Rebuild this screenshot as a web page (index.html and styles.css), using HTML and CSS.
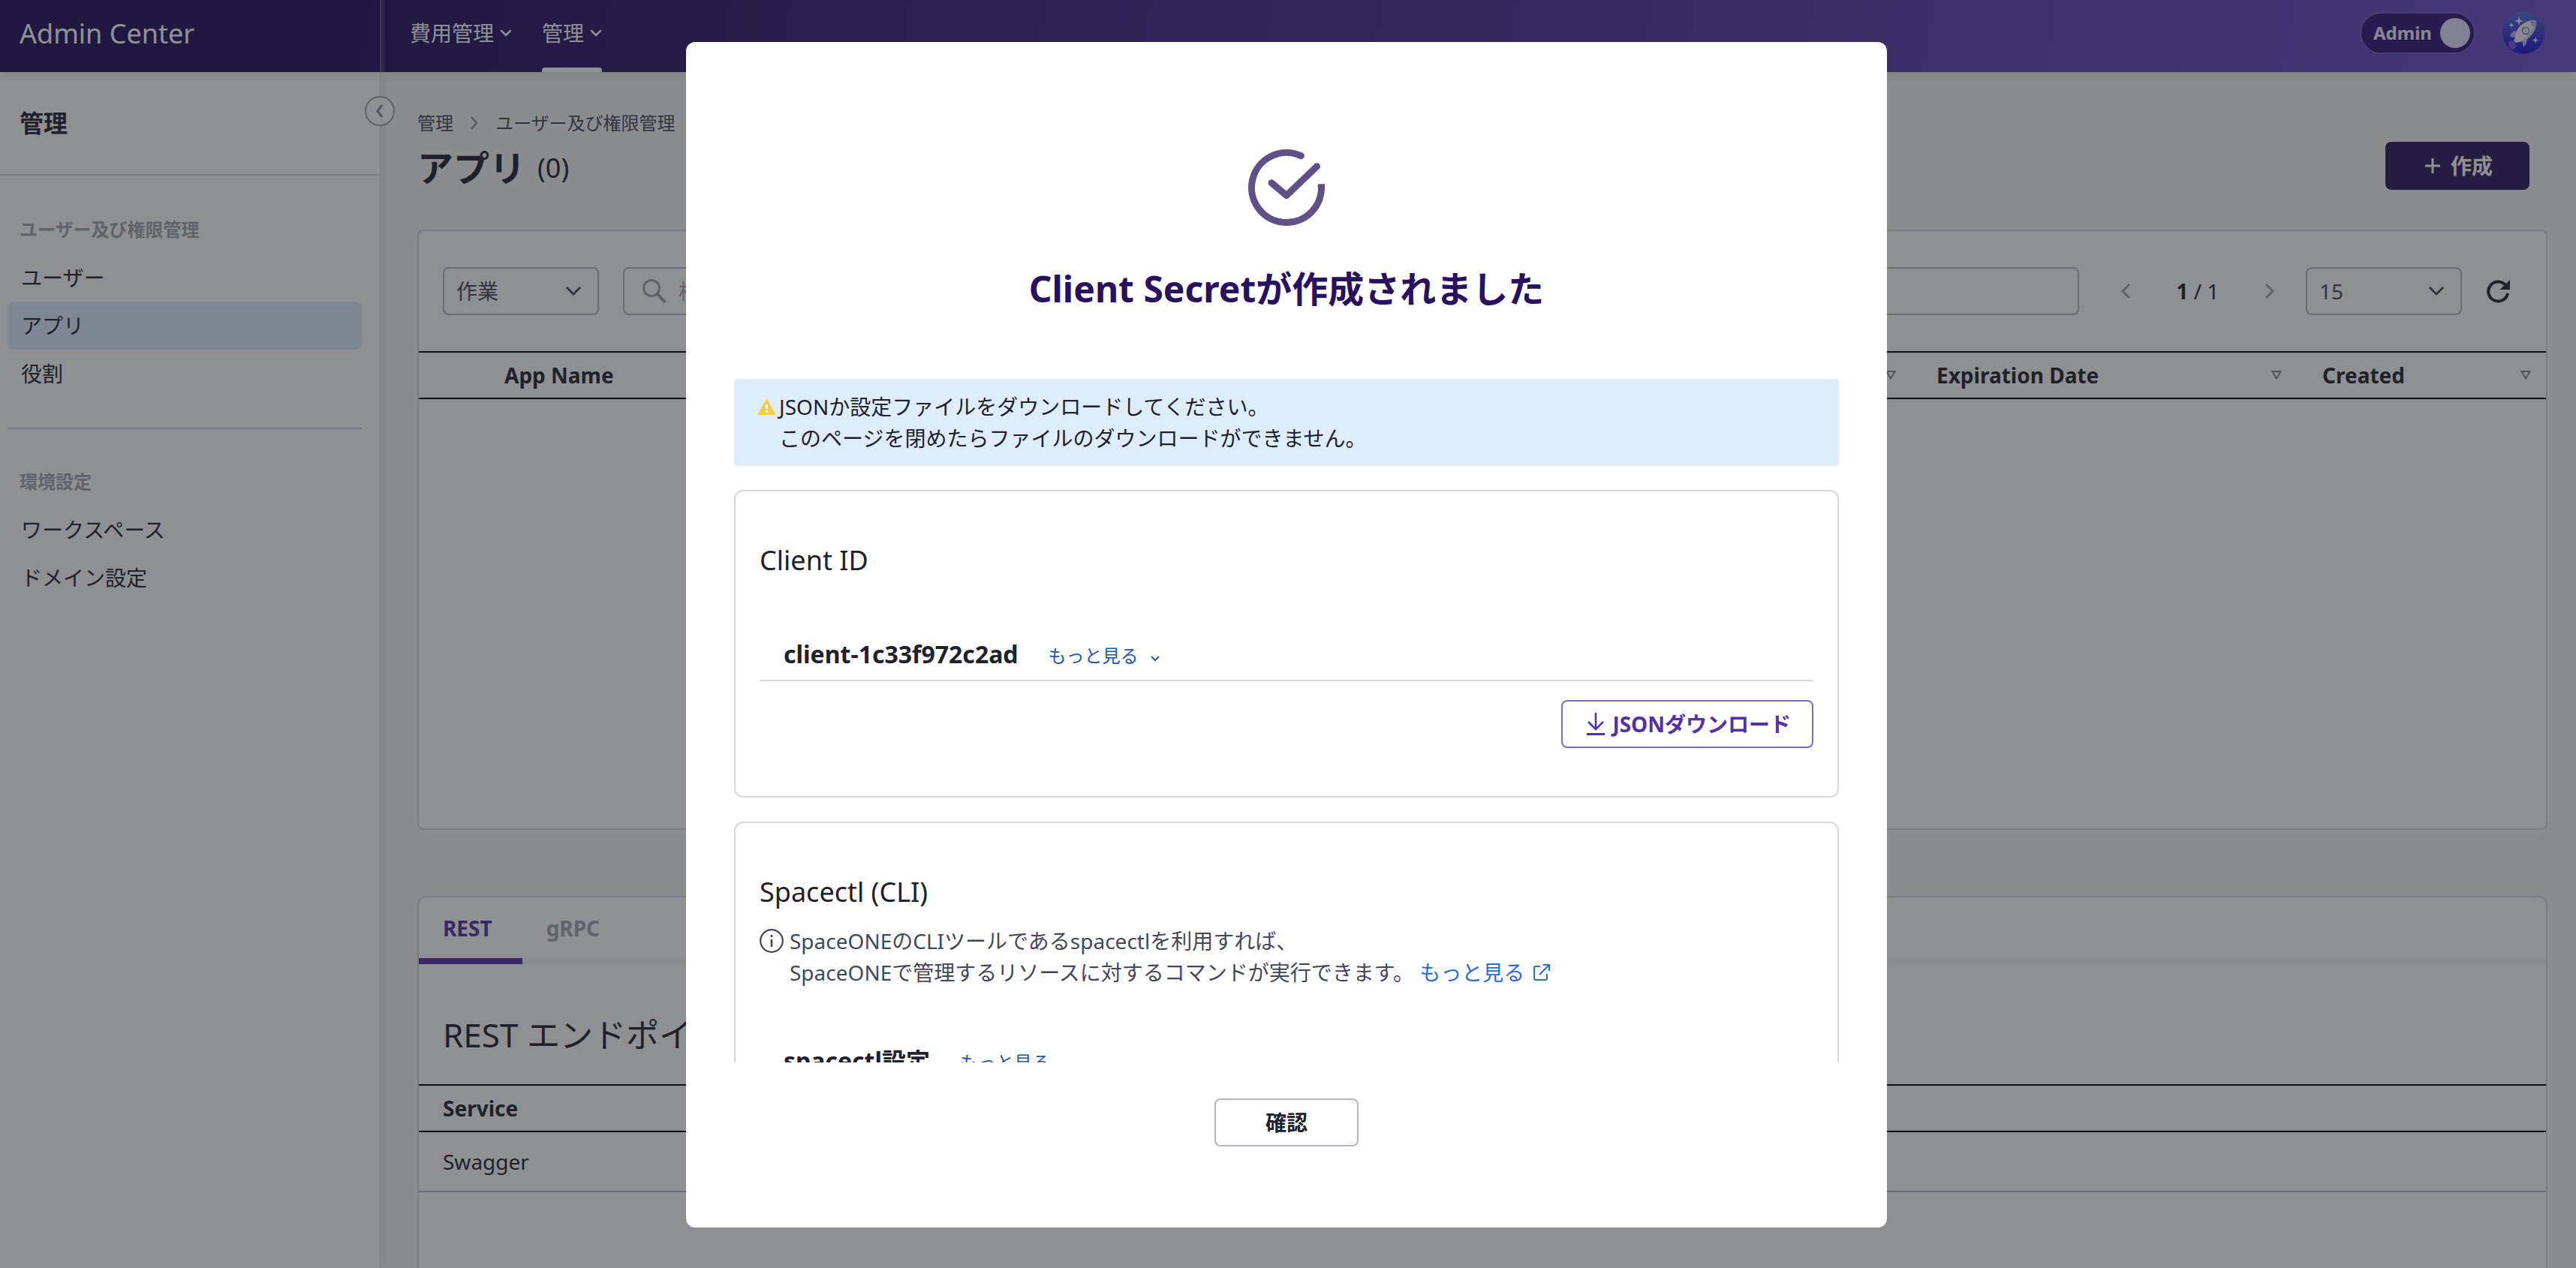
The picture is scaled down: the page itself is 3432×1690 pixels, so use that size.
FILE: index.html
```html
<!DOCTYPE html>
<html lang="ja">
<head>
<meta charset="utf-8">
<title>Admin Center</title>
<link rel="stylesheet" href="styles.css">
</head>
<body>
<div class="app">
  <header class="topbar">
    <div class="brand">Admin Center</div>
    <nav class="gnb">
      <button class="gnb-item" type="button">費用管理
        <svg width="16" height="10" viewBox="0 0 16 10"><path d="M2 2l6 6 6-6" fill="none" stroke="currentColor" stroke-width="2.5" stroke-linecap="round"/></svg>
      </button>
      <button class="gnb-item current" type="button">管理
        <svg width="16" height="10" viewBox="0 0 16 10"><path d="M2 2l6 6 6-6" fill="none" stroke="currentColor" stroke-width="2.5" stroke-linecap="round"/></svg>
      </button>
    </nav>
    <button class="admin-toggle" type="button"><span>Admin</span><i class="knob"></i></button>
    <button class="avatar" type="button" aria-label="Profile">
      <svg width="56" height="56" viewBox="0 0 56 56">
        <defs><linearGradient id="sky" x1="0" y1="0" x2="0" y2="1"><stop offset="0" stop-color="#5a68d8"/><stop offset="1" stop-color="#1a10c8"/></linearGradient></defs>
        <circle cx="28" cy="28" r="28" fill="url(#sky)"/>
        <path d="M8 40c2 0 2-2 4-2 3 1 6 4 6 7s-2 4-5 5c-3-2-6-6-5-10z" fill="#7a4ee0"/>
        <path d="M17 24l-6 5-1 4 8 1zM33 36l-1 6-4 5-2-9z" fill="#b8b0ee"/>
        <path d="M45 11c1 9-3 18-12 25-4 3-9 4-11 4l-4 1-3-3 2-3c-1-4 1-9 4-13 6-8 15-12 24-11z" fill="#f4f4f8"/>
        <path d="M45 11c1 9-3 18-12 25-4 3-9 4-11 4 12-7 20-17 23-29z" fill="#cfd0dc"/>
        <path d="M45 11c0 3 0 6-1 9-4-1-7-4-7-8 3-1 5-1 8-1z" fill="#b8b0ee"/>
        <circle cx="31" cy="25" r="4.500" fill="#e6e8f6" stroke="#6670b8" stroke-width="1.300"/>
        <path d="M22 6l1.500 4.500L28 12l-4.500 1.500L22 18l-1.500-4.500L16 12l4.500-1.500zM12 14l1 2.500 2.500 1-2.500 1-1 2.500-1-2.500-2.500-1 2.500-1zM44 33l1 3.500 3.500 1-3.500 1-1 3.500-1-3.500-3.500-1 3.500-1z" fill="#e4e6ff"/>
      </svg>
    </button>
  </header>

  <div class="body">
    <aside class="sidebar">
      <h2 class="side-title">管理</h2>
      <section class="side-group">
        <h3>ユーザー及び権限管理</h3>
        <a href="#">ユーザー</a>
        <a href="#" class="active">アプリ</a>
        <a href="#">役割</a>
      </section>
      <section class="side-group">
        <h3>環境設定</h3>
        <a href="#">ワークスペース</a>
        <a href="#">ドメイン設定</a>
      </section>
      <button class="collapse" type="button" aria-label="Collapse">
        <svg width="12" height="20" viewBox="0 0 12 20"><path d="M9 2L3 10l6 8" fill="none" stroke="#8d8f99" stroke-width="3"/></svg>
      </button>
    </aside>

    <main class="content">
      <nav class="breadcrumb">
        <a href="#">管理</a>
        <svg width="12" height="18" viewBox="0 0 12 18"><path d="M2 1l7 8-7 8" fill="none" stroke="#858791" stroke-width="2"/></svg>
        <a href="#">ユーザー及び権限管理</a>
      </nav>
      <div class="page-head">
        <h1>アプリ<small>(0)</small></h1>
        <button class="btn-create" type="button">
          <svg width="20" height="20" viewBox="0 0 20 20"><path d="M10 0v20M0 10h20" stroke="currentColor" stroke-width="3"/></svg>作成
        </button>
      </div>

      <section class="panel list-panel">
        <div class="toolbar">
          <span class="select">
            <select aria-label="作業"><option>作業</option></select>
            <svg width="22" height="14" viewBox="0 0 22 14"><path d="M2 2l9 9 9-9" fill="none" stroke="#454757" stroke-width="3"/></svg>
          </span>
          <span class="search">
            <svg width="32" height="32" viewBox="0 0 32 32"><circle cx="12" cy="12" r="10.500" fill="none" stroke="#a3a4ab" stroke-width="3"/><path d="M20 20l10 11" stroke="#a3a4ab" stroke-width="4"/></svg>
            <input type="text" placeholder="検索" aria-label="検索">
          </span>
          <div class="pager">
            <button type="button" aria-label="Previous"><svg width="32" height="32" viewBox="0 0 32 32"><path d="M21 7l-9 9 9 9" fill="none" stroke="#a3a4ab" stroke-width="3"/></svg></button>
            <span><b>1</b> / 1</span>
            <button type="button" aria-label="Next"><svg width="32" height="32" viewBox="0 0 32 32"><path d="M11 7l9 9-9 9" fill="none" stroke="#a3a4ab" stroke-width="3"/></svg></button>
          </div>
          <span class="select">
            <select aria-label="Page size"><option>15</option></select>
            <svg width="22" height="14" viewBox="0 0 22 14"><path d="M2 2l9 9 9-9" fill="none" stroke="#454757" stroke-width="3"/></svg>
          </span>
          <button class="refresh" type="button" aria-label="Refresh">
            <svg width="32" height="32" viewBox="0 0 32 32"><path d="M26.500 8.500A13 13 0 1 0 29 19" fill="none" stroke="#20212b" stroke-width="4"/><path d="M32 1v13H18.500z" fill="#20212b"/></svg>
          </button>
        </div>
        <table class="grid">
          <colgroup><col class="c-check"><col><col class="c-exp"><col class="c-created"></colgroup>
          <thead><tr>
            <th></th>
            <th><div>App Name <svg width="14" height="12" viewBox="0 0 14 12"><path d="M1.500 1h11L7 10.500z" fill="none" stroke="#858791" stroke-width="2"/></svg></div></th>
            <th><div>Expiration Date <svg width="14" height="12" viewBox="0 0 14 12"><path d="M1.500 1h11L7 10.500z" fill="none" stroke="#858791" stroke-width="2"/></svg></div></th>
            <th><div>Created <svg width="14" height="12" viewBox="0 0 14 12"><path d="M1.500 1h11L7 10.500z" fill="none" stroke="#858791" stroke-width="2"/></svg></div></th>
          </tr></thead>
        </table>
      </section>

      <section class="panel api-panel">
        <div class="tabs">
          <button class="tab on" type="button">REST</button>
          <button class="tab" type="button">gRPC</button>
        </div>
        <h2>REST エンドポイント</h2>
        <table class="grid services">
          <thead><tr><th>Service</th></tr></thead>
          <tbody><tr><td>Swagger</td></tr></tbody>
        </table>
      </section>
    </main>
  </div>
</div>

<div class="overlay">
  <div class="modal" role="dialog" aria-labelledby="modal-title">
    <div class="modal-head">
      <svg width="102" height="102" viewBox="0 0 102 102" fill="none" stroke="#5f5187" stroke-width="9" stroke-linecap="round"><path d="M70.300 8.700A46.500 46.500 0 1 0 97.300 46.500V51"/><path d="M31 44.700L51 61.500 91.500 22.700" stroke-linejoin="round"/></svg>
      <h2 id="modal-title">Client Secretが作成されました</h2>
    </div>
    <div class="modal-body">
      <div class="notice">
        <svg width="24" height="22" viewBox="0 0 24 22"><path d="M11.500 2L22 21H1z" fill="#f8cc3c" stroke="#f8cc3c" stroke-width="2" stroke-linejoin="round"/><path d="M11.500 8v6M11.500 16v3" stroke="#fff" stroke-width="3"/></svg>
        <p>JSONか設定ファイルをダウンロードしてください。<br>このページを閉めたらファイルのダウンロードができません。</p>
      </div>
      <section class="card">
        <h3>Client ID</h3>
        <div class="row">
          <strong>client-1c33f972c2ad</strong>
          <a href="#" class="more">もっと見る <svg width="12" height="10" viewBox="0 0 12 10"><path d="M1 2l5 5 5-5" fill="none" stroke="currentColor" stroke-width="2"/></svg></a>
        </div>
        <button class="btn-download" type="button">
          <svg width="24" height="32" viewBox="0 0 24 32"><path d="M12 1v22M2 13l10 10 10-10" fill="none" stroke="currentColor" stroke-width="2.500"/><path d="M0 29.500h24" stroke="currentColor" stroke-width="3"/></svg>JSONダウンロード
        </button>
      </section>
      <section class="card">
        <h3>Spacectl (CLI)</h3>
        <div class="desc">
          <svg width="32" height="32" viewBox="0 0 32 32"><circle cx="16" cy="16" r="14.800" fill="none" stroke="#454757" stroke-width="2.200"/><path d="M16 8v3M16 14v10" stroke="#454757" stroke-width="2.600"/></svg>
          <p>SpaceONEのCLIツールであるspacectlを利用すれば、<br>SpaceONEで管理するリソースに対するコマンドが実行できます。
            <a href="#">もっと見る <svg width="22" height="22" viewBox="0 0 22 22"><path d="M9 3H3q-2 0-2 2v14q0 2 2 2h13q2 0 2-2v-6M13 1h8v8M21 1L8 14" fill="none" stroke="currentColor" stroke-width="2"/></svg></a></p>
        </div>
        <div class="row">
          <strong>spacectl設定</strong>
          <a href="#" class="more">もっと見る <svg width="12" height="10" viewBox="0 0 12 10"><path d="M1 2l5 5 5-5" fill="none" stroke="currentColor" stroke-width="2"/></svg></a>
        </div>
      </section>
    </div>
    <div class="modal-foot"><button class="btn-ok" type="button">確認</button></div>
  </div>
</div>
</body>
</html>
```

FILE: styles.css
```css
* { box-sizing: border-box; margin: 0; padding: 0; }

body {
  font-family: "Noto Sans", "Noto Sans CJK JP", sans-serif;
  font-size: 28px;
  line-height: 42px;
  color: #20212b;
  background: #f7f7f7;
}

button, select, input { font: inherit; color: inherit; background: none; border: 0; }
a { color: inherit; text-decoration: none; }
svg { display: block; flex: none; }

.app { height: 100vh; display: flex; flex-direction: column; overflow: hidden; }

/* Top bar */
.topbar {
  position: relative;
  z-index: 2;
  flex: none;
  height: 96px;
  padding-right: 42px;
  display: flex;
  align-items: center;
  color: #fff;
  background: linear-gradient(99deg, #210f57 14%, #6b51c9);
  box-shadow: 0 4px 12px rgba(0, 0, 0, .1);
}
.brand {
  align-self: stretch;
  width: 514px;
  padding-left: 26px;
  font-size: 36px;
  line-height: 90px;
  background: linear-gradient(90deg, rgba(255, 255, 255, .28), rgba(255, 255, 255, 0)) right / 8px 100% no-repeat;
}
.gnb { align-self: stretch; flex: 1; display: flex; gap: 40px; padding-left: 32px; }
.gnb-item { display: flex; align-items: center; gap: 8px; padding-bottom: 8px; }
.gnb-item.current { position: relative; }
.gnb-item.current::after {
  content: "";
  position: absolute;
  inset: auto 0 0;
  height: 6px;
  background: #fff;
  border-radius: 4px 4px 0 0;
}
.admin-toggle {
  width: 154px;
  height: 56px;
  margin: 0 36px 8px 0;
  padding: 0 5px 0 16px;
  display: flex;
  align-items: center;
  justify-content: space-between;
  font-size: 24px;
  font-weight: 700;
  color: #f0ecff;
  background: #311774;
  border: 2px solid #6f5cc4;
  border-radius: 28px;
}
.knob { width: 40px; height: 40px; border-radius: 50%; background: #e5dffc; }
.avatar { margin-bottom: 8px; }

/* Sidebar */
.body { flex: 1; min-height: 0; display: flex; }
.sidebar {
  position: relative;
  flex: none;
  width: 506px;
  background: #fff;
  box-shadow: 0 0 16px rgba(0, 0, 0, .12);
}
.side-title {
  height: 138px;
  padding-left: 26px;
  font-size: 32px;
  line-height: 136px;
  border-bottom: 2px solid #d8d9dc;
}
.side-group { margin: 0 24px 0 10px; padding: 40px 0; }
.side-group + .side-group { padding-top: 38px; border-top: 2px solid #d8d9dc; }
.side-group h3 { padding-left: 16px; font-size: 24px; line-height: 64px; color: #a3a4ab; }
.side-group a { display: block; padding-left: 18px; line-height: 64px; border-radius: 8px; }
.side-group a.active { background: #deedfe; }
.collapse {
  position: absolute;
  top: 32px;
  right: -20px;
  width: 40px;
  height: 40px;
  display: grid;
  place-items: center;
  background: #fff;
  border: 2px solid #a3a4ab;
  border-radius: 50%;
}

/* Page content */
.content { flex: 1; min-width: 0; padding: 50px 38px 0 50px; }
.breadcrumb { display: flex; align-items: center; gap: 22px; font-size: 24px; line-height: 36px; color: #454757; }
.page-head { display: flex; justify-content: space-between; align-items: flex-start; margin: 6px 24px 46px 0; }
h1 { display: flex; align-items: center; gap: 16px; font-size: 48px; line-height: 72px; }
h1 small { font-size: 36px; font-weight: 400; }
.btn-create {
  width: 192px;
  height: 64px;
  margin-top: 1px;
  padding-left: 4px;
  display: flex;
  align-items: center;
  justify-content: center;
  gap: 14px;
  font-weight: 700;
  color: #fff;
  background: #291758;
  border-radius: 8px;
}
.panel { background: #fff; border: 2px solid #d8d9dc; border-radius: 8px; }
.list-panel { min-height: 800px; }
.toolbar { display: flex; align-items: center; gap: 32px; padding: 48px 48px 48px 32px; }
.select { position: relative; flex: none; width: 208px; }
.select select {
  appearance: none;
  width: 100%;
  height: 64px;
  padding: 0 16px;
  border: 2px solid #b5b6bb;
  border-radius: 8px;
  color: #454757;
}
.select svg { position: absolute; right: 23px; top: 25px; pointer-events: none; }
.search {
  flex: 1;
  height: 64px;
  display: flex;
  align-items: center;
  gap: 16px;
  padding: 0 24px;
  border: 2px solid #b5b6bb;
  border-radius: 8px;
}
.search input { flex: 1; outline: 0; }
.search input::placeholder { color: #a3a4ab; }
.pager { width: 224px; margin-left: 14px; display: flex; align-items: center; justify-content: space-between; }

.grid { width: 100%; table-layout: fixed; border-spacing: 0; }
.grid th {
  height: 64px;
  padding: 0 20px 0 34px;
  text-align: left;
  border: solid #000;
  border-width: 2px 0;
}
.grid th div { display: flex; align-items: center; justify-content: space-between; }
.grid td { height: 80px; padding: 0 32px; border-bottom: 2px solid #b5b6bb; }
.grid.services th { padding-left: 32px; }
.c-check { width: 80px; }
.c-exp { width: 514px; }
.c-created { width: 332px; }

/* API endpoints */
.api-panel { height: 100vh; margin-top: 88px; border-radius: 12px; }
.tabs { display: flex; background: linear-gradient(#f7f7f7, #f7f7f7) bottom / 100% 8px no-repeat; }
.tab {
  padding: 20px 32px 19px;
  font-weight: 700;
  color: #a3a4ab;
  border-bottom: 8px solid transparent;
}
.tab.on { padding-right: 40px; color: #552da3; border-color: #552da3; }
.api-panel h2 { padding: 62px 32px 34px; font-size: 44px; font-weight: 400; line-height: 64px; }

/* Modal */
.overlay {
  position: fixed;
  inset: 0;
  z-index: 10;
  display: flex;
  align-items: center;
  justify-content: center;
  padding: 2px 4px 0 0;
  background: rgba(31, 33, 41, .5);
}
.modal {
  width: 1600px;
  max-width: 96vw;
  height: calc(100vh - 110px);
  display: flex;
  flex-direction: column;
  padding: 143px 64px 108px;
  background: #fff;
  border-radius: 12px;
}
.modal-head { display: flex; flex-direction: column; align-items: center; padding-bottom: 84px; }
.modal-head h2 { margin-top: 48px; font-size: 48px; line-height: 72px; color: #2a1160; }
.modal-body { flex: 1; min-height: 0; overflow-y: auto; scrollbar-width: none; }
.notice { display: flex; gap: 4px; padding: 16px 32px; background: #deedfe; border-radius: 4px; }
.notice svg { margin-top: 10px; }
.card { margin-top: 32px; padding: 64px 32px; border: 2px solid #d8d8da; border-radius: 12px; }
.card h3 { font-size: 36px; font-weight: 400; line-height: 56px; }
.row {
  display: flex;
  align-items: center;
  gap: 40px;
  margin-top: 64px;
  padding: 13px 32px 14px;
  border-bottom: 2px solid #d8d8da;
}
.row strong { font-size: 32px; line-height: 40px; }
.more { display: flex; align-items: center; gap: 16px; padding-top: 4px; font-size: 24px; line-height: 36px; color: #2357b0; }
.more svg { margin-top: 8px; }
.btn-download {
  height: 64px;
  margin: 25px 0 0 auto;
  padding: 0 28px 0 32px;
  display: flex;
  align-items: center;
  gap: 10px;
  font-weight: 700;
  color: #532fa8;
  border: 2px solid #7b6bd0;
  border-radius: 8px;
}
.desc { display: flex; gap: 8px; margin-top: 16px; color: #454757; }
.desc > svg { margin-top: 5px; }
.desc a { display: inline-flex; align-items: center; gap: 12px; color: #2b6cd9; }
.modal-foot { padding-top: 48px; text-align: center; }
.btn-ok {
  display: block;
  width: 192px;
  height: 64px;
  margin: 0 auto;
  font-weight: 700;
  border: 2px solid #b4b5bb;
  border-radius: 8px;
}
```
